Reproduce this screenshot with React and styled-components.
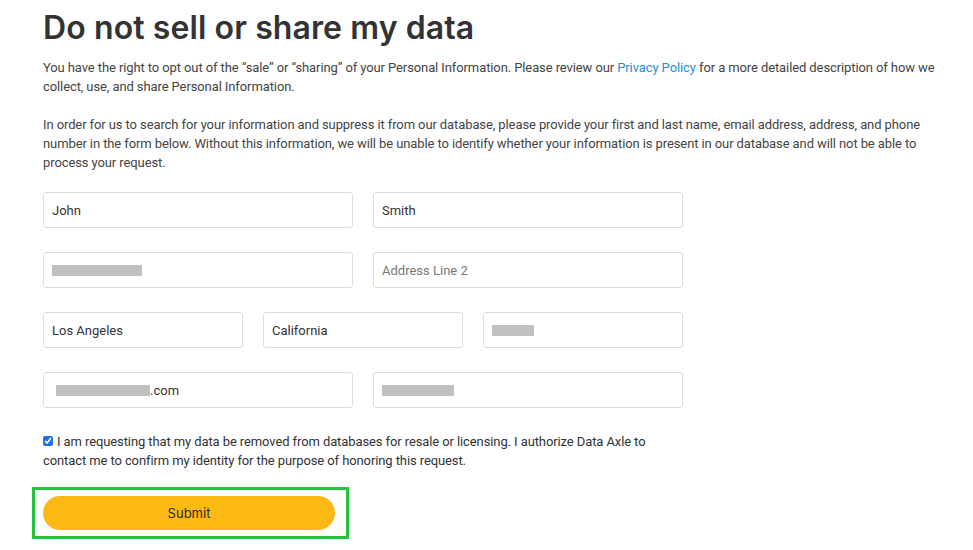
import styled, { createGlobalStyle } from 'styled-components';

const GlobalStyle = createGlobalStyle`
  body {
    margin: 0;
    background: #ffffff;
    font-family: Roboto, 'Liberation Sans', sans-serif;
  }
`;

export default function App() {
  return (
    <>
      <GlobalStyle />
      <Page>
        <Title>Do not sell or share my data</Title>
        <Paragraph>
          You have the right to opt out of the “sale” or “sharing” of your Personal Information. Please
          review our <Link href="#">Privacy Policy</Link> for a more detailed description of how we
          collect, use, and share Personal Information.
        </Paragraph>
        <Paragraph>
          In order for us to search for your information and suppress it from our database, please provide
          your first and last name, email address, address, and phone number in the form below. Without
          this information, we will be unable to identify whether your information is present in our
          database and will not be able to process your request.
        </Paragraph>
        <Form>
          <Row cols={2}>
            <Field>
              <Input defaultValue="John" />
            </Field>
            <Field>
              <Input defaultValue="Smith" />
            </Field>
          </Row>
          <Row cols={2}>
            <Field>
              <Redacted w={90} />
            </Field>
            <Field>
              <Input placeholder="Address Line 2" />
            </Field>
          </Row>
          <Row cols={3}>
            <Field>
              <Input defaultValue="Los Angeles" />
            </Field>
            <Field>
              <Input defaultValue="California" />
            </Field>
            <Field>
              <Redacted w={42} />
            </Field>
          </Row>
          <Row cols={2}>
            <Field>
              <Redacted w={94} left={4} />
              <FieldText>.com</FieldText>
            </Field>
            <Field>
              <Redacted w={72} />
            </Field>
          </Row>
          <Consent>
            <Checkbox type="checkbox" defaultChecked />
            <span>
              I am requesting that my data be removed from databases for resale or licensing. I authorize
              Data Axle to contact me to confirm my identity for the purpose of honoring this request.
            </span>
          </Consent>
          <Highlight>
            <SubmitButton type="button">Submit</SubmitButton>
          </Highlight>
        </Form>
      </Page>
    </>
  );
}

const Page = styled.div`
  width: 900px;
  padding: 8px 0 10px 43px;
  color: #444444;
`;
const Title = styled.h1`
  margin: 0 0 10px;
  font-family: Inter, 'Open Sans', sans-serif;
  font-weight: 600;
  font-size: 32px;
  line-height: 40px;
  letter-spacing: 0.1px;
  color: #333333;
`;
const Paragraph = styled.p`
  margin: 0 0 19px;
  font-size: 13px;
  line-height: 19px;
  letter-spacing: -0.1px;
  color: #444444;
`;
const Link = styled.a`
  color: #2a8fcf;
  text-decoration: none;
`;
const Form = styled.form`
  width: 640px;
  display: flex;
  flex-direction: column;
  gap: 24px;
  margin-top: 20px;
`;
const Row = styled.div`
  display: grid;
  grid-template-columns: repeat(${(p) => p.cols}, 1fr);
  column-gap: 20px;
`;
const Field = styled.div`
  box-sizing: border-box;
  height: 36px;
  border: 1px solid #dddddd;
  border-radius: 3px;
  display: flex;
  align-items: center;
  padding: 0 8px;
  background: #ffffff;
`;
const Input = styled.input`
  border: none;
  outline: none;
  width: 100%;
  padding: 0;
  font-family: Roboto, 'Liberation Sans', sans-serif;
  font-size: 13px;
  color: #333333;
  background: transparent;
  &::placeholder {
    color: #777777;
  }
`;
const FieldText = styled.span`
  font-size: 13px;
  color: #333333;
`;
const Redacted = styled.span`
  display: block;
  width: ${(p) => p.w}px;
  height: 11px;
  margin-left: ${(p) => p.left || 0}px;
  background: #c0c0c0;
`;
const Consent = styled.label`
  display: block;
  font-size: 13px;
  line-height: 19px;
  letter-spacing: -0.1px;
  color: #333333;
`;
const Checkbox = styled.input`
  width: 10px;
  height: 10px;
  margin: 0 4px 0 0;
  vertical-align: 0;
  accent-color: #1a73e8;
`;
const Highlight = styled.div`
  align-self: flex-start;
  margin: -7px 0 0 -11px;
  padding: 6px 11px 6px 8px;
  border: 3px solid #22c33f;
`;
const SubmitButton = styled.button`
  display: block;
  width: 292px;
  height: 34px;
  border: none;
  border-radius: 17px;
  background: #fdb913;
  font-family: Inter, 'Open Sans', sans-serif;
  font-weight: 400;
  font-size: 13px;
  color: #2b2b2b;
  cursor: pointer;
`;
